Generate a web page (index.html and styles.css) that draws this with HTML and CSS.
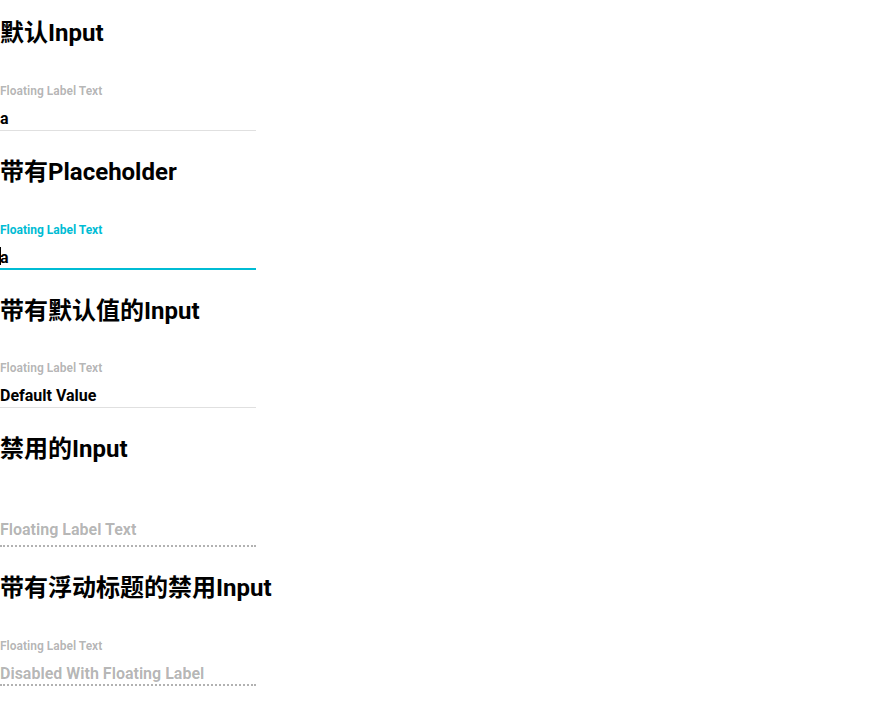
FILE: index.html
```html
<!DOCTYPE html>
<html lang="zh">
<head>
<meta charset="utf-8">
<title>Input</title>
<link rel="stylesheet" href="styles.css">
</head>
<body>
  <section class="demo">
    <h2 class="demo-title">默认Input</h2>
    <div class="field">
      <label class="field-label shrink">Floating Label Text</label>
      <input class="field-input" type="text" value="a" readonly>
      <hr class="underline">
    </div>
  </section>

  <section class="demo">
    <h2 class="demo-title">带有Placeholder</h2>
    <div class="field focused">
      <label class="field-label shrink">Floating Label Text</label>
      <input class="field-input" type="text" value="a" readonly>
      <span class="caret"></span>
      <hr class="underline">
      <hr class="underline focus-line">
    </div>
  </section>

  <section class="demo">
    <h2 class="demo-title">带有默认值的Input</h2>
    <div class="field">
      <label class="field-label shrink">Floating Label Text</label>
      <input class="field-input" type="text" value="Default Value" readonly>
      <hr class="underline">
    </div>
  </section>

  <section class="demo">
    <h2 class="demo-title">禁用的Input</h2>
    <div class="field disabled">
      <label class="field-label">Floating Label Text</label>
      <input class="field-input" type="text" value="" disabled>
      <hr class="underline">
    </div>
  </section>

  <section class="demo">
    <h2 class="demo-title">带有浮动标题的禁用Input</h2>
    <div class="field disabled">
      <label class="field-label shrink">Floating Label Text</label>
      <input class="field-input" type="text" value="Disabled With Floating Label" disabled>
      <hr class="underline">
    </div>
  </section>
</body>
</html>
```

FILE: styles.css
```css
html, body {
  margin: 0;
  padding: 0;
  background: #ffffff;
}

body {
  font-family: Roboto, "Noto Sans CJK SC", sans-serif;
  font-weight: 700;
  color: #000000;
}

.demo {
  display: block;
}

.demo-title {
  margin: 19.92px 0;
  font-size: 24px;
  line-height: 27px;
  font-weight: 700;
}

.field {
  position: relative;
  display: flex;
  flex-direction: column;
  width: 256px;
  height: 72px;
  font-size: 16px;
  line-height: 24px;
}

.field-label {
  position: absolute;
  left: 0;
  top: 36px;
  line-height: 22px;
  font-size: 16px;
  color: rgba(0, 0, 0, 0.3);
  transform-origin: left top;
  white-space: nowrap;
  z-index: 1;
}

.field-label.shrink {
  transform: scale(0.75) translate(0, -26.67px);
}

.focused .field-label {
  color: #00bcd4;
}

.field-input {
  display: block;
  box-sizing: border-box;
  width: 100%;
  height: 24px;
  margin: 40px 0 0;
  padding: 0;
  border: none;
  outline: none;
  background: transparent;
  font: inherit;
  font-weight: 700;
  line-height: 24px;
  color: #000000;
  -webkit-text-fill-color: #000000;
}

.disabled .field-input {
  color: rgba(0, 0, 0, 0.3);
  -webkit-text-fill-color: rgba(0, 0, 0, 0.3);
}

.caret {
  position: absolute;
  left: 0;
  top: 41px;
  width: 1px;
  height: 18px;
  background: #000000;
}

.underline {
  position: absolute;
  left: 0;
  bottom: 8px;
  width: 100%;
  margin: 0;
  border: none;
  border-bottom: 1px solid #e0e0e0;
  box-sizing: content-box;
}

.focus-line {
  border-bottom: 2px solid #00bcd4;
}

.disabled .underline {
  border-bottom: 2px dotted rgba(0, 0, 0, 0.3);
}
```
